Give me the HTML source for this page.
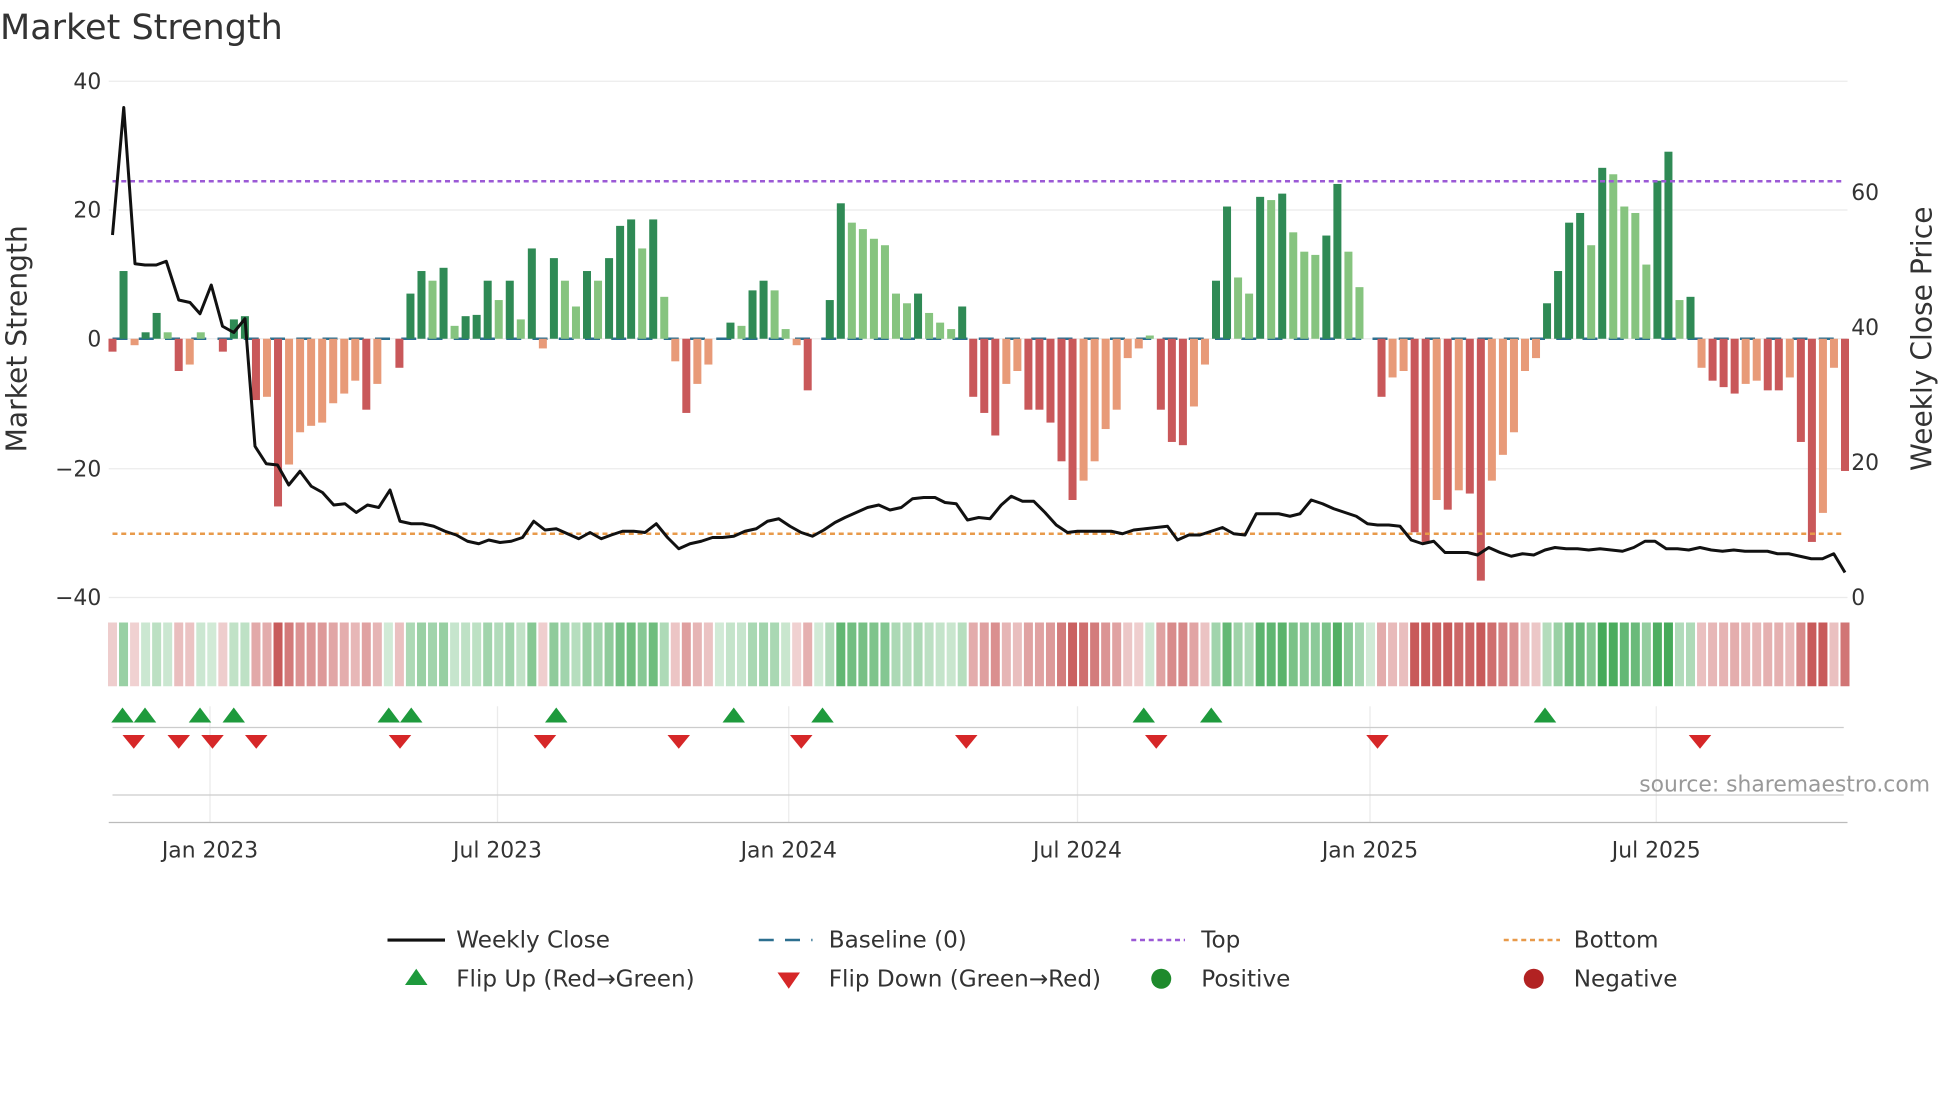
<!DOCTYPE html>
<html><head><meta charset="utf-8"><style>
html,body{margin:0;padding:0;background:#fff;width:1960px;height:1102px;overflow:hidden}
svg{display:block}
text{font-family:"DejaVu Sans","Liberation Sans",sans-serif;fill:#333}
</style></head><body>
<svg id="s" width="1960" height="1102" viewBox="0 0 1568 881.6" xmlns="http://www.w3.org/2000/svg">
<text x="0" y="31" font-size="28">Market Strength</text>
<g stroke="#ebebeb" stroke-width="1">
<line x1="87" x2="1478" y1="65" y2="65"/><line x1="87" x2="1478" y1="168" y2="168"/>
<line x1="87" x2="1478" y1="271" y2="271"/><line x1="87" x2="1478" y1="375" y2="375"/>
<line x1="87" x2="1478" y1="478" y2="478"/>
<line x1="168" x2="168" y1="565" y2="658"/><line x1="398" x2="398" y1="565" y2="658"/>
<line x1="631" x2="631" y1="565" y2="658"/><line x1="862" x2="862" y1="565" y2="658"/>
<line x1="1096" x2="1096" y1="565" y2="658"/><line x1="1325" x2="1325" y1="565" y2="658"/>
</g>
<line x1="90" x2="1475" y1="582" y2="582" stroke="#ccc"/>
<line x1="90" x2="1475" y1="636" y2="636" stroke="#ccc"/>
<line x1="87" x2="1478" y1="658" y2="658" stroke="#bbb"/>
<g font-size="17.5" text-anchor="end">
<text x="81" y="71">40</text><text x="81" y="174">20</text><text x="81" y="277">0</text>
<text x="81" y="381">−20</text><text x="81" y="484">−40</text></g>
<g font-size="17.5">
<text x="1481" y="160">60</text><text x="1481" y="268">40</text><text x="1481" y="376">20</text><text x="1481" y="484">0</text></g>
<g font-size="17.5" text-anchor="middle">
<text x="168" y="686">Jan 2023</text><text x="398" y="686">Jul 2023</text><text x="631" y="686">Jan 2024</text>
<text x="862" y="686">Jul 2024</text><text x="1096" y="686">Jan 2025</text><text x="1325" y="686">Jul 2025</text></g>
<text font-size="22.5" text-anchor="middle" transform="translate(21,271) rotate(-90)">Market Strength</text>
<text font-size="22.5" text-anchor="middle" transform="translate(1545,271) rotate(-90)">Weekly Close Price</text>
<text x="1544" y="633" font-size="17.5" text-anchor="end" style="fill:#999">source: sharemaestro.com</text>
<g id="bars"></g>
<line x1="90" x2="1475" y1="145" y2="145" stroke="#9b59d6" stroke-width="2" stroke-dasharray="4,3"/>
<line x1="90" x2="1475" y1="427" y2="427" stroke="#e89a4a" stroke-width="2" stroke-dasharray="4,3"/>
<polyline id="price" fill="none" stroke="#111" stroke-width="2.4" stroke-linejoin="round"/>
<g id="marks"></g>
<g font-size="18.5">
<line x1="310" x2="356" y1="752" y2="752" stroke="#111" stroke-width="2.5"/><text x="365" y="758">Weekly Close</text>
<line x1="607" x2="650" y1="752" y2="752" stroke="#2c6f8f" stroke-width="2" stroke-dasharray="12,9"/><text x="663" y="758">Baseline (0)</text>
<line x1="905" x2="948" y1="752" y2="752" stroke="#9b59d6" stroke-width="2" stroke-dasharray="4,3"/><text x="961" y="758">Top</text>
<line x1="1203" x2="1248" y1="752" y2="752" stroke="#e89a4a" stroke-width="2" stroke-dasharray="4,3"/><text x="1259" y="758">Bottom</text>
<polygon points="324,788 342,788 333,775" fill="#1e9a3c"/><text x="365" y="789">Flip Up (Red→Green)</text>
<polygon points="622,778 640,778 631,791" fill="#d62728"/><text x="663" y="789">Flip Down (Green→Red)</text>
<circle cx="929" cy="783" r="8" fill="#1e8a2c"/><text x="961" y="789">Positive</text>
<circle cx="1227" cy="783" r="8" fill="#b22222"/><text x="1259" y="789">Negative</text>
</g>
</svg>
<script>
var V=[-2,10.5,-1,1,4,1,-5,-4,1,0,-2,3,3.5,-9.5,-9,-26,-19.5,-14.5,-13.5,-13,-10,-8.5,-6.5,-11,-7,0,-4.5,7,10.5,9,11,2,3.5,3.7,9,6,9,3,14,-1.5,12.5,9,5,10.5,9,12.5,17.5,18.5,14,18.5,6.5,-3.5,-11.5,-7,-4,0,2.5,2,7.5,9,7.5,1.5,-1,-8,0,6,21,18,17,15.5,14.5,7,5.5,7,4,2.5,1.5,5,-9,-11.5,-15,-7,-5,-11,-11,-13,-19,-25,-22,-19,-14,-11,-3,-1.5,0.5,-11,-16,-16.5,-10.5,-4,9,20.5,9.5,7,22,21.5,22.5,16.5,13.5,13,16,24,13.5,8,0,-9,-6,-5,-30,-31.5,-25,-26.5,-23.5,-24,-37.5,-22,-18,-14.5,-5,-3,5.5,10.5,18,19.5,14.5,26.5,25.5,20.5,19.5,11.5,24.5,29,6,6.5,-4.5,-6.5,-7.5,-8.5,-7,-6.5,-8,-8,-6,-16,-31.5,-27,-4.5,-20.5];
var n=V.length,x0=90,x1=1476,st=(x1-x0)/(n-1);
var b=document.getElementById('bars'),h='';
h+='<line x1="90" x2="1475" y1="271" y2="271" stroke="#2c6f8f" stroke-width="2" stroke-dasharray="12,9"/>';
for(var i=0;i<n;i++){var v=V[i],x=x0+i*st,prev=i?V[i-1]:0;
 var strong=Math.abs(v)>=Math.abs(prev);var c;
 if(v>=0)c=strong?'#2f8a55':'#86c47f';else c=strong?'#c9585a':'#e89a78';
 var y=271-v*5.16,hh=Math.abs(v)*5.16;if(v!=0)h+='<rect x="'+(x-3.2)+'" y="'+Math.min(y,271)+'" width="6.4" height="'+hh+'" fill="'+c+'"/>';
 var a=Math.min(1,0.25+Math.abs(v)/35);var sc=v>=0?'rgba(70,170,90,'+a+')':'rgba(200,90,90,'+a+')';
 h+='<rect x="'+(x-3.6)+'" y="498" width="7.2" height="51" fill="'+sc+'"/>';}
b.innerHTML=h;
var P=[[90,188],[99,86],[108,211],[116,212],[125,212],[133,209],[143,240],[152,242],[160,251],[169,228],[178,261],[187,266],[196,255],[204,357],[213,371],[222,372],[231,388],[240,377],[249,389],[258,394],[267,404],[276,403],[285,410],[294,404],[303,406],[312,392],[320,417],[329,419],[338,419],[347,421],[356,425],[365,428],[374,433],[383,435],[391,432],[400,434],[409,433],[418,430],[427,417],[436,424],[445,423],[454,427],[463,431],[472,426],[481,431],[489,428],[498,425],[507,425],[516,426],[525,419],[534,430],[543,439],[552,435],[561,433],[570,430],[578,430],[587,429],[596,425],[605,423],[614,417],[623,415],[632,421],[641,426],[650,429],[659,424],[668,418],[676,414],[685,410],[694,406],[703,404],[712,408],[721,406],[730,399],[739,398],[748,398],[756,402],[765,403],[774,416],[783,414],[792,415],[801,404],[809,397],[818,401],[827,401],[836,410],[845,420],[854,426],[862,425],[871,425],[880,425],[889,425],[898,427],[907,424],[916,423],[925,422],[934,421],[942,432],[951,428],[960,428],[969,425],[978,422],[987,427],[996,428],[1005,411],[1014,411],[1023,411],[1032,413],[1040,411],[1049,400],[1058,403],[1067,407],[1076,410],[1085,413],[1094,419],[1102,420],[1111,420],[1120,421],[1129,432],[1138,435],[1147,433],[1156,442],[1165,442],[1174,442],[1182,444],[1191,438],[1200,442],[1209,445],[1218,443],[1227,444],[1236,440],[1244,438],[1253,439],[1262,439],[1271,440],[1280,439],[1289,440],[1298,441],[1307,438],[1316,433],[1324,433],[1333,439],[1342,439],[1351,440],[1360,438],[1369,440],[1378,441],[1387,440],[1396,441],[1405,441],[1414,441],[1422,443],[1431,443],[1440,445],[1449,447],[1458,447],[1467,443],[1476,458]];
document.getElementById('price').setAttribute('points',P.map(function(p){return p.join(',')}).join(' '));
var U=[98,116,160,187,311,329,445,587,658,915,969,1236],D=[107,143,170,205,320,436,543,641,773,925,1102,1360],m='';
U.forEach(function(x){m+='<polygon points="'+(x-9)+',578 '+(x+9)+',578 '+x+',566" fill="#1e9a3c"/>'});
D.forEach(function(x){m+='<polygon points="'+(x-9)+',588 '+(x+9)+',588 '+x+',599" fill="#d62728"/>'});
document.getElementById('marks').innerHTML=m;
</script>
</body></html>
